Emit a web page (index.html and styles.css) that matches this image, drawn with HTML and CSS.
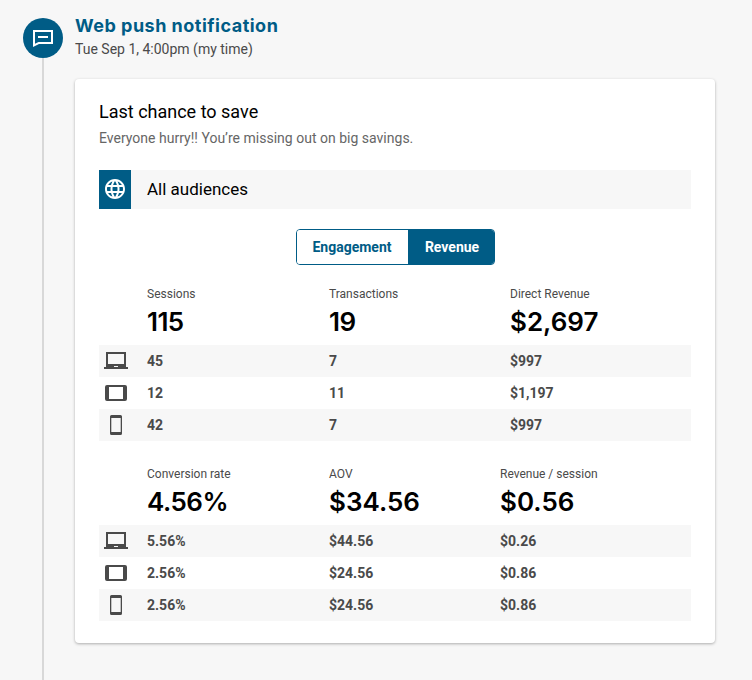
FILE: index.html
```html
<!DOCTYPE html>
<html lang="en">
<head>
<meta charset="utf-8">
<title>Web push notification</title>
<link rel="stylesheet" href="styles.css">
</head>
<body>
<svg class="sprite" width="0" height="0" aria-hidden="true">
  <symbol id="laptop" viewBox="0 0 24 20"><path fill-rule="evenodd" d="M2 1h20v15h2v2H0v-2h2zM4 3v10h16V3zM10 15v1h4v-1z"/></symbol>
  <symbol id="tablet" viewBox="0 0 24 20"><path fill-rule="evenodd" d="M3 2h18a2 2 0 0 1 2 2v12a2 2 0 0 1-2 2H3a2 2 0 0 1-2-2V4a2 2 0 0 1 2-2zM5 4v12h14V4z"/></symbol>
  <symbol id="phone" viewBox="0 0 24 20"><path fill-rule="evenodd" d="M7.500 0h9A1.500 1.500 0 0 1 18 1.500v17a1.500 1.500 0 0 1-1.500 1.500h-9A1.500 1.500 0 0 1 6 18.500v-17A1.500 1.500 0 0 1 7.500 0zM7.300 3v14h9.400V3z"/></symbol>
</svg>
<main class="entry">
  <div class="rail">
    <div class="badge"><svg width="24" height="24" viewBox="0 0 24 24"><path fill="#fff" fill-rule="evenodd" d="M2 4h20v14H8l-6 3zM4 6v11.800L7.500 16H20V6z"/><path fill="#fff" d="M7 10h10v2H7z"/></svg></div>
    <div class="line"></div>
  </div>
  <div class="content">
    <h1 class="title">Web push notification</h1>
    <p class="date">Tue Sep 1, 4:00pm (my time)</p>
    <section class="card">
      <h2 class="subject">Last chance to save</h2>
      <p class="message">Everyone hurry!! You’re missing out on big savings.</p>
      <div class="audience">
        <div class="globe"><svg width="24" height="24" viewBox="0 0 24 24"><path fill="#fff" d="M11.990 2C6.470 2 2 6.480 2 12s4.470 10 9.990 10C17.520 22 22 17.520 22 12S17.520 2 11.990 2zm6.930 6h-2.950c-.32-1.250-.78-2.450-1.380-3.560 1.840.63 3.370 1.910 4.330 3.560zM12 4.040c.83 1.200 1.480 2.530 1.910 3.960h-3.820c.43-1.430 1.080-2.760 1.910-3.960zM4.260 14C4.100 13.360 4 12.690 4 12s.1-1.360.26-2h3.380c-.08.66-.14 1.320-.14 2s.06 1.340.14 2H4.260zm.82 2h2.950c.32 1.250.78 2.450 1.380 3.560-1.840-.63-3.370-1.900-4.330-3.560zm2.950-8H5.080c.96-1.660 2.490-2.930 4.330-3.560C8.810 5.550 8.350 6.750 8.030 8zM12 19.960c-.83-1.200-1.480-2.530-1.910-3.960h3.820c-.43 1.430-1.080 2.760-1.910 3.960zM14.340 14H9.660c-.09-.66-.16-1.320-.16-2s.07-1.350.16-2h4.680c.09.65.16 1.320.16 2s-.07 1.340-.16 2zm.25 5.560c.6-1.110 1.060-2.310 1.380-3.560h2.950c-.96 1.650-2.490 2.930-4.330 3.560zM16.360 14c.08-.66.14-1.320.14-2s-.06-1.340-.14-2h3.380c.16.64.26 1.310.26 2s-.1 1.360-.26 2h-3.380z"/></svg></div>
        <div class="audience-name">All audiences</div>
      </div>
      <div class="tabs"><button class="tab">Engagement</button><button class="tab active">Revenue</button></div>
      <div class="stats">
        <div class="row labels"><i></i><span>Sessions</span><span>Transactions</span><span>Direct Revenue</span></div>
        <div class="row totals"><i></i><span class="ones">115</span><span class="ones">19</span><span>$2,697</span></div>
        <div class="row device shaded"><svg><use href="#laptop"/></svg><span>45</span><span>7</span><span>$997</span></div>
        <div class="row device"><svg><use href="#tablet"/></svg><span>12</span><span>11</span><span>$1,197</span></div>
        <div class="row device shaded"><svg><use href="#phone"/></svg><span>42</span><span>7</span><span>$997</span></div>
      </div>
      <div class="stats rates">
        <div class="row labels"><i></i><span>Conversion rate</span><span>AOV</span><span>Revenue / session</span></div>
        <div class="row totals"><i></i><span class="percent">4.56%</span><span>$34.56</span><span>$0.56</span></div>
        <div class="row device shaded"><svg><use href="#laptop"/></svg><span>5.56%</span><span>$44.56</span><span>$0.26</span></div>
        <div class="row device"><svg><use href="#tablet"/></svg><span>2.56%</span><span>$24.56</span><span>$0.86</span></div>
        <div class="row device shaded"><svg><use href="#phone"/></svg><span>2.56%</span><span>$24.56</span><span>$0.86</span></div>
      </div>
    </section>
  </div>
</main>
</body>
</html>
```
FILE: styles.css
```css
* { box-sizing: border-box; }
body { margin: 0; background: #f7f7f7; font-family: Roboto, sans-serif; color: #4a4a4a; overflow: hidden; }
h1, h2, p { margin: 0; font-weight: 400; }
.sprite { display: block; }
.entry { display: flex; height: 680px; padding: 18px 0 0 23px; }
.rail { width: 40px; margin-right: 12px; display: flex; flex-direction: column; align-items: center; flex-shrink: 0; }
.badge { width: 40px; height: 40px; border-radius: 50%; background: #005c86; display: flex; align-items: center; justify-content: center; flex-shrink: 0; }
.badge svg, .globe svg { display: block; }
.line { width: 2px; flex: 1; background: #d8d8d8; }
.title { font: 700 18px/20px Inter, sans-serif; color: #005c86; margin-top: -2px; letter-spacing: .49px; }
.date { font-size: 14px; line-height: 20px; margin-top: 3px; }
.card { width: 640px; height: 564px; margin-top: 20px; background: #fff; border-radius: 4px; box-shadow: 0 1px 3px rgba(0,0,0,.3); padding: 21px 24px 22px; }
.subject { font-size: 18px; line-height: 24px; color: #000; }
.message { font-size: 14px; line-height: 20px; color: #666; margin-top: 4px; letter-spacing: .01px; }
.audience { display: flex; height: 39px; background: #f7f7f7; margin-top: 22px; }
.globe { width: 32px; background: #005c86; display: flex; align-items: center; justify-content: center; padding-bottom: 1px; }
.audience-name { margin-left: 16px; font-size: 17px; line-height: 39px; color: #000; }
.tabs { display: flex; width: 199px; height: 36px; margin: 20px 0 0 197px; border: 1px solid #005c86; border-radius: 4px; overflow: hidden; }
.tab { border: 0; padding: 0 1px 0 0; width: 111px; background: #fff; color: #005c86; font: 700 14px/34px Roboto, sans-serif; }
.tab.active { width: 86px; padding: 0 0 0 2px; background: #005c86; color: #fff; }
.stats { margin-top: 20px; }
.rates { margin-top: 24px; }
.row { display: grid; grid-template-columns: 48px 182px 181px 1fr; align-items: center; }
.rates .row { grid-template-columns: 48px 182px 171px 1fr; }
.labels { height: 18px; font-size: 12px; }
.totals { height: 42px; padding-bottom: 6px; font-family: Inter, sans-serif; font-size: 26px; font-weight: 600; color: #000; }
.totals .ones { letter-spacing: -.6px; }
.totals .percent { letter-spacing: -.5px; }
.device { height: 32px; font-size: 14px; font-weight: 700; }
.device svg { width: 24px; height: 20px; margin-left: 5px; fill: #4a4a4a; }
.shaded { background: #f7f7f7; }
```
